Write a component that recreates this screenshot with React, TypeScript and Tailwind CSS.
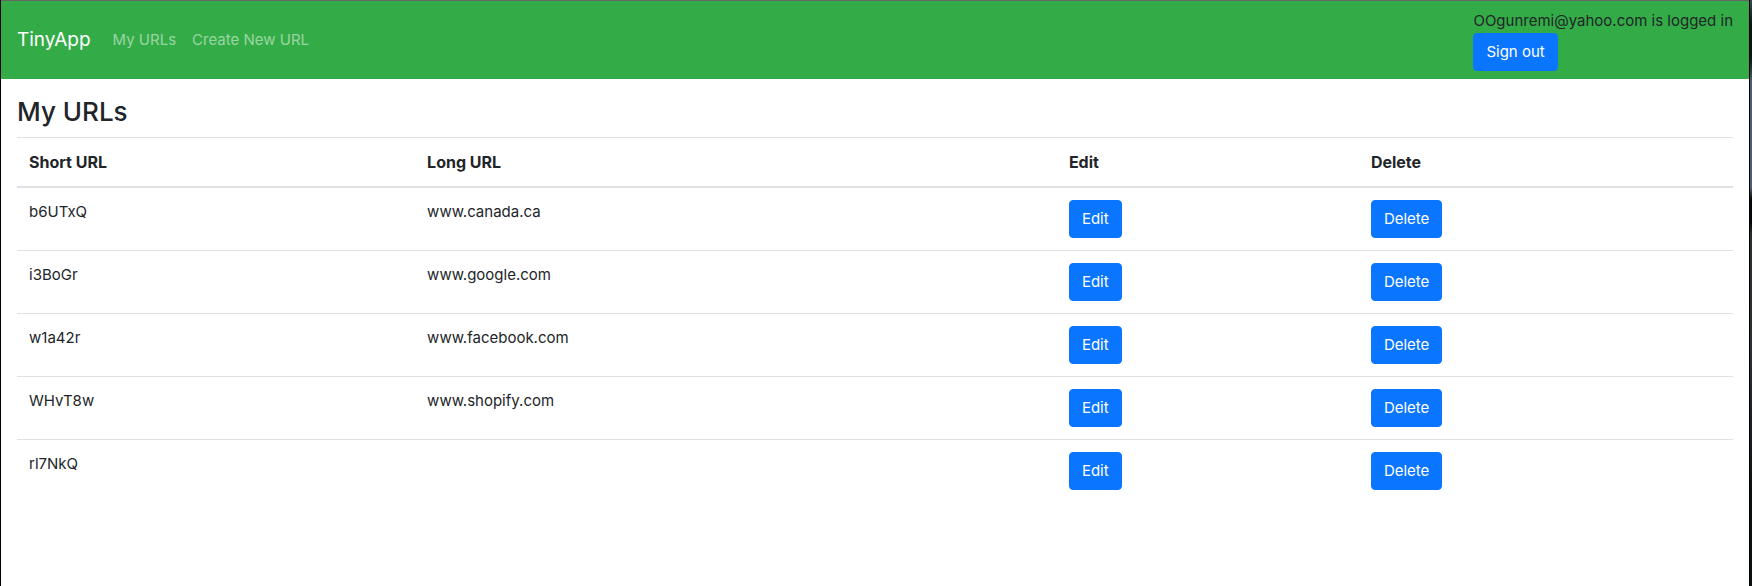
import type { ReactNode } from 'react';

const urls = [
  { short: 'b6UTxQ', long: 'www.canada.ca' },
  { short: 'i3BoGr', long: 'www.google.com' },
  { short: 'w1a42r', long: 'www.facebook.com' },
  { short: 'WHvT8w', long: 'www.shopify.com' },
  { short: 'rl7NkQ', long: '' },
];

const columns = [
  { name: 'Short URL', width: 'w-[23.2%]' },
  { name: 'Long URL', width: 'w-[37.4%]' },
  { name: 'Edit', width: 'w-[17.6%]' },
  { name: 'Delete', width: 'w-[21.8%]' },
];

function Button({ children, type = 'button' }: { children: ReactNode; type?: 'button' | 'submit' }) {
  return (
    <button
      type={type}
      className="block cursor-pointer rounded border border-[#0a75ff] bg-[#0a75ff] px-3 py-1.5 text-[15px] leading-6 text-white hover:bg-[#0069d9]"
    >
      {children}
    </button>
  );
}

function Navbar() {
  return (
    <header className="flex items-center justify-between bg-[#33ac47] px-4 py-2">
      <nav className="flex items-center">
        <a href="/urls" className="mr-3.5 text-[19px] text-white">
          TinyApp
        </a>
        <a href="/urls" className="p-2 text-white/50 hover:text-white/75">
          My URLs
        </a>
        <a href="/urls/new" className="p-2 text-white/50 hover:text-white/75">
          Create New URL
        </a>
      </nav>
      <div>
        <p>OOgunremi@yahoo.com is logged in</p>
        <Button type="submit">Sign out</Button>
      </div>
    </header>
  );
}

export default function App() {
  return (
    <div className="flex min-h-screen bg-black pl-px font-['Inter','Liberation_Sans',sans-serif] text-[15px] leading-6 text-[#212529]">
      <div className="mr-px min-w-0 grow border-t border-[#666666] bg-white">
        <Navbar />
        <main className="px-4 pt-4">
          <h1 className="mb-2 text-[26px] leading-[34px] font-medium">My URLs</h1>
          <table className="w-full table-fixed border-separate border-spacing-0">
            <thead>
              <tr>
                {columns.map((column) => (
                  <th
                    key={column.name}
                    scope="col"
                    className={`${column.width} border-t border-b-2 border-[#dee2e6] p-3 text-left text-base leading-6 font-bold`}
                  >
                    {column.name}
                  </th>
                ))}
              </tr>
            </thead>
            <tbody className="[&>tr+tr>td]:border-t">
              {urls.map((url) => (
                <tr key={url.short}>
                  <td className="border-[#dee2e6] p-3 align-top">{url.short}</td>
                  <td className="border-[#dee2e6] p-3 align-top">{url.long}</td>
                  <td className="border-[#dee2e6] p-3 align-top">
                    <Button>Edit</Button>
                  </td>
                  <td className="border-[#dee2e6] p-3 align-top">
                    <Button>Delete</Button>
                  </td>
                </tr>
              ))}
            </tbody>
          </table>
        </main>
      </div>
      <div className="w-0.5 shrink-0 bg-[linear-gradient(#3a4658_0%,#10141c_4%,#10141c_10%,#4f5d70_14%,#4f5d70_32%,#06080a_34%,#06080a_38%,#2c2e2c_40%,#2a3034_60%,#0a1012_85%)]" />
    </div>
  );
}
